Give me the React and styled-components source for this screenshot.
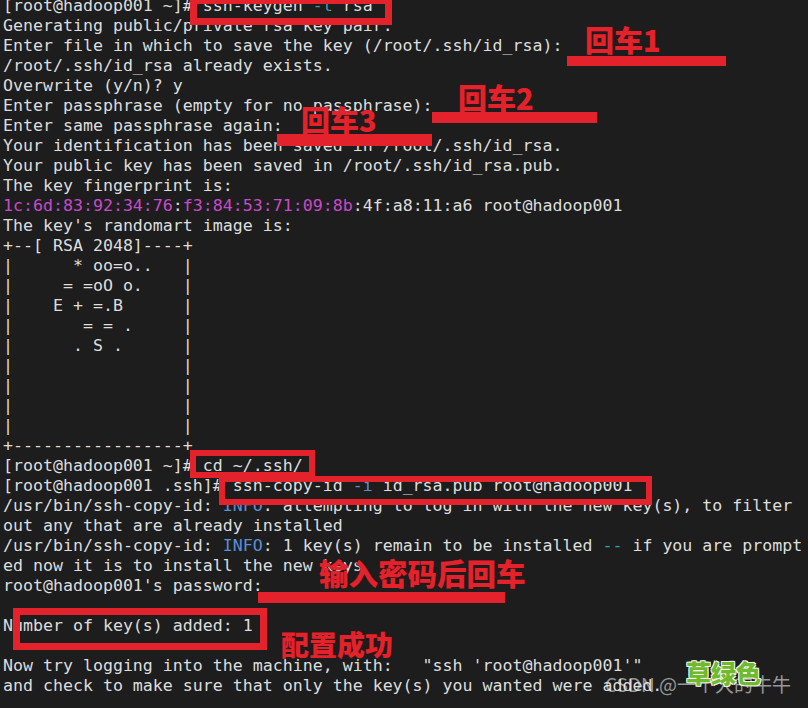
import React from 'react';
import styled, { createGlobalStyle } from 'styled-components';

const GlobalStyle = createGlobalStyle`
  html, body {
    margin: 0;
    padding: 0;
    background: #1d1d1d;
  }
`;

const RED = '#e3222b';

const tones = {
  plain: '#dedede',
  magenta: '#c94ac9',
  teal: '#2ea3a8',
  blue: '#5b8fd6',
};

const Screen = styled.div`
  position: relative;
  width: 808px;
  height: 708px;
  overflow: hidden;
  background: #1d1d1d;
`;

const Terminal = styled.div`
  margin-top: -4px;
  padding-left: 3px;
  font-family: "DejaVu Sans Mono", "Liberation Mono", monospace;
  font-size: 16.6px;
  line-height: 20px;
  color: ${tones.plain};
  white-space: pre;
`;

const Line = styled.div`
  height: 20px;
`;

const Tone = styled.span`
  color: ${p => tones[p.$tone] || tones.plain};
`;

// red marks drawn over the screenshot
const Frame = styled.div`
  position: absolute;
  left: ${p => p.$x}px;
  top: ${p => p.$y}px;
  width: ${p => p.$w}px;
  height: ${p => p.$h}px;
  box-sizing: border-box;
  border: ${p => p.$b}px solid ${RED};
`;

const Callout = styled.div`
  position: absolute;
  left: ${p => p.$x}px;
  top: ${p => p.$y}px;
  display: flex;
  flex-direction: column;
  align-items: flex-start;
  gap: ${p => p.$gap || 0}px;
`;

const Label = styled.div`
  margin-left: ${p => p.$indent || 0}px;
  font-family: "Noto Sans CJK SC", "Noto Sans", sans-serif;
  font-weight: 900;
  font-size: ${p => p.$size}px;
  line-height: 1;
  color: ${RED};
  white-space: nowrap;
  text-shadow: 0 0 1px #5a0c10;
`;

const Bar = styled.div`
  width: ${p => p.$w}px;
  height: ${p => p.$h}px;
  background: ${RED};
`;

const Note = styled(Label)`
  position: absolute;
  left: ${p => p.$x}px;
  top: ${p => p.$y}px;
`;

const GreenTag = styled(Note)`
  color: #6fba2e;
  text-shadow: -1px -1px 0 #f2f2e8, 1px -1px 0 #f2f2e8, -1px 1px 0 #f2f2e8, 1px 1px 0 #f2f2e8;
`;

const Watermark = styled.div`
  position: absolute;
  right: 17px;
  top: 674px;
  font-family: "Noto Sans CJK SC", "Noto Sans", sans-serif;
  font-size: 19px;
  line-height: 1;
  color: rgba(235, 235, 235, 0.6);
  white-space: nowrap;
`;

const lines = [
  [['[root@hadoop001 ~]# ssh-keygen '], ['-t', 'teal'], [' rsa']],
  'Generating public/private rsa key pair.',
  'Enter file in which to save the key (/root/.ssh/id_rsa): ',
  '/root/.ssh/id_rsa already exists.',
  'Overwrite (y/n)? y',
  'Enter passphrase (empty for no passphrase): ',
  'Enter same passphrase again: ',
  'Your identification has been saved in /root/.ssh/id_rsa.',
  'Your public key has been saved in /root/.ssh/id_rsa.pub.',
  'The key fingerprint is:',
  [
    ['1c:6d:83:92:34:76', 'magenta'],
    [':'],
    ['f3:84:53:71:09:8b', 'magenta'],
    [':4f:a8:11:a6 root@hadoop001'],
  ],
  "The key's randomart image is:",
  '+--[ RSA 2048]----+',
  '|      * oo=o..   |',
  '|     = =oO o.    |',
  '|    E + =.B      |',
  '|       = = .     |',
  '|      . S .      |',
  '|                 |',
  '|                 |',
  '|                 |',
  '|                 |',
  '+-----------------+',
  '[root@hadoop001 ~]# cd ~/.ssh/',
  [['[root@hadoop001 .ssh]# ssh-copy-id '], ['-i', 'blue'], [' id_rsa.pub root@hadoop001']],
  [['/usr/bin/ssh-copy-id: '], ['INFO', 'blue'], [': attempting to log in with the new key(s), to filter']],
  'out any that are already installed',
  [
    ['/usr/bin/ssh-copy-id: '],
    ['INFO', 'blue'],
    [': 1 key(s) remain to be installed '],
    ['--', 'teal'],
    [' if you are prompt'],
  ],
  'ed now it is to install the new keys',
  "root@hadoop001's password: ",
  '',
  'Number of key(s) added: 1',
  '',
  'Now try logging into the machine, with:   "ssh \'root@hadoop001\'"',
  'and check to make sure that only the key(s) you wanted were added.',
];

const App = () => (
  <Screen>
    <GlobalStyle />
    <Terminal>
      {lines.map((line, i) => (
        <Line key={i}>
          {typeof line === 'string'
            ? line
            : line.map(([text, tone], j) => (
                <Tone key={j} $tone={tone}>{text}</Tone>
              ))}
        </Line>
      ))}
    </Terminal>

    <Frame $x={190} $y={-3} $w={202} $h={28} $b={7} />
    <Callout $x={567} $y={25} $gap={2}>
      <Label $indent={18} $size={29}>回车1</Label>
      <Bar $w={159} $h={10} />
    </Callout>
    <Callout $x={432} $y={83}>
      <Label $indent={26} $size={29}>回车2</Label>
      <Bar $w={165} $h={11} />
    </Callout>
    <Callout $x={277} $y={105} $gap={-1}>
      <Label $indent={24} $size={29}>回车3</Label>
      <Bar $w={155} $h={12} />
    </Callout>

    <Frame $x={190} $y={450} $w={125} $h={28} $b={6} />
    <Frame $x={219} $y={476} $w={433} $h={29} $b={6} />
    <Callout $x={258} $y={558} $gap={4}>
      <Label $indent={61} $size={29.5}>输入密码后回车</Label>
      <Bar $w={247} $h={11} />
    </Callout>
    <Frame $x={13} $y={608} $w={254} $h={42} $b={7} />
    <Note $x={281} $y={630} $size={28}>配置成功</Note>

    <Watermark>CSDN @一个大的牛牛</Watermark>
    <GreenTag $x={686} $y={660} $size={25}>草绿色</GreenTag>
  </Screen>
);

export default App;
